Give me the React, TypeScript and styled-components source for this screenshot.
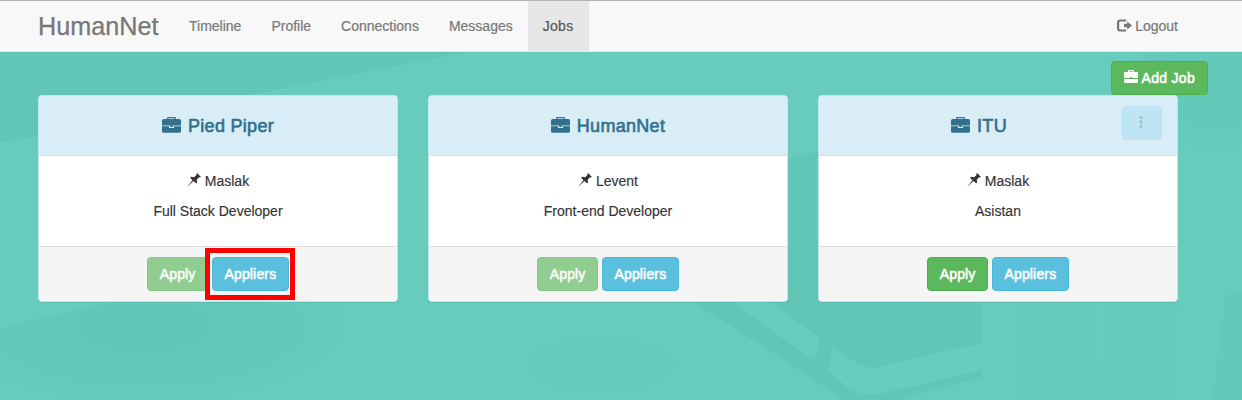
import React from "react";
import styled, { createGlobalStyle, css } from "styled-components";

const GlobalStyle = createGlobalStyle`
  *, *::before, *::after { box-sizing: border-box; }
  body {
    margin: 0;
    font-family: "Liberation Sans", Arial, sans-serif;
    font-size: 14px;
    line-height: 20px;
    color: #333;
  }
`;

const Page = styled.div`
  position: relative;
  height: 400px;
  overflow: hidden;
  background: #67ccbc;
`;

const Backdrop = styled.svg`
  position: absolute;
  inset: 0;
`;

const Navbar = styled.nav`
  position: relative;
  height: 52px;
  display: flex;
  background: #f8f8f8;
  border-top: 1px solid #b4b4b4;
  border-bottom: 1px solid #e7e7e7;
  padding: 0 49px 0 38px;
`;

const Brand = styled.a`
  width: 136px;
  font-size: 25.2px;
  line-height: 50px;
  color: #777;
  -webkit-text-stroke: 0.25px #777;
`;

const NavLink = styled.a<{ $active?: boolean }>`
  display: flex;
  align-items: center;
  gap: 3px;
  padding: 0 15px;
  color: ${(p) => (p.$active ? "#555" : "#777")};
  -webkit-text-stroke: 0.2px currentColor;
  ${(p) =>
    p.$active &&
    css`
      width: 61px;
      letter-spacing: 0.3px;
      background: #e7e7e7;
    `}
`;

const NavRight = styled.div`
  display: flex;
  margin-left: auto;
`;

const Toolbar = styled.div`
  position: relative;
  display: flex;
  justify-content: flex-end;
  padding: 9px 34px 0 0;
`;

const tones = {
  success: css`
    background: #5cb85c;
    border-color: #4cae4c;
  `,
  info: css`
    background: #5bc0de;
    border-color: #46b8da;
  `,
};

const Button = styled.button<{ $tone: "success" | "info"; $faded?: boolean; $spaced?: boolean }>`
  height: 34px;
  display: flex;
  align-items: center;
  gap: 4px;
  padding: 0 ${(p) => (p.$spaced ? 12 : 11.5)}px;
  border: 1px solid;
  border-radius: 4px;
  font: inherit;
  letter-spacing: ${(p) => (p.$spaced ? 0.3 : 0.15)}px;
  color: #fff;
  -webkit-text-stroke: 0.55px #fff;
  ${(p) => tones[p.$tone]}
  opacity: ${(p) => (p.$faded ? 0.65 : 1)};
  svg { margin-top: -3px; }
`;

const Cards = styled.main`
  position: relative;
  display: grid;
  grid-template-columns: repeat(3, 360px);
  gap: 30px;
  padding-left: 38px;
`;

const Card = styled.section`
  height: 207px;
  display: flex;
  flex-direction: column;
  background: #fff;
  border: 1px solid #bce8f1;
  border-radius: 4px;
  box-shadow: 0 1px 1px rgba(0, 0, 0, 0.05);
`;

const CardHeader = styled.header<{ $withMenu?: boolean }>`
  position: relative;
  height: 60px;
  display: flex;
  align-items: center;
  justify-content: center;
  gap: 7px;
  padding-right: ${(p) => (p.$withMenu ? 38 : 0)}px;
  background: #d9edf7;
  border-bottom: 1px solid #bce8f1;
  border-radius: 3px 3px 0 0;
  color: #31708f;
  svg { margin-top: -2px; }
`;

const Title = styled.h3`
  margin: 0;
  font-size: 18px;
  font-weight: 400;
  letter-spacing: 0.3px;
  -webkit-text-stroke: 0.6px #31708f;
`;

const MenuButton = styled.button`
  position: absolute;
  top: 10px;
  right: 15px;
  width: 40px;
  height: 34px;
  display: flex;
  align-items: center;
  justify-content: center;
  padding: 0 2px 0 0;
  background: #bfe4f3;
  border: 1px solid #b9e2f1;
  border-radius: 4px;
`;

const CardBody = styled.div`
  flex: 1;
  padding-top: 15px;
  text-align: center;
`;

const Line = styled.p`
  display: flex;
  justify-content: center;
  gap: 4px;
  margin: 0 0 10px;
  -webkit-text-stroke: 0.15px currentColor;
  svg { margin-top: 2px; }
`;

const CardFooter = styled.footer`
  height: 55px;
  display: flex;
  align-items: flex-start;
  justify-content: center;
  gap: 4px;
  padding-top: 10px;
  background: #f5f5f5;
  border-top: 1px solid #ddd;
  border-radius: 0 0 3px 3px;
`;

const Highlight = styled.span`
  position: relative;
  &::after {
    content: "";
    position: absolute;
    inset: -9px -6px -9px -7px;
    border: 5px solid #f00;
  }
`;

const Briefcase = ({ width = 19, height = 16 }: { width?: number; height?: number }) => (
  <svg width={width} height={height} viewBox="0 0 19 16" fill="currentColor">
    <path fillRule="evenodd" d="M5 2V1.200Q5 0 6.200 0h6.600Q14 0 14 1.200V2h3.400Q19 2 19 3.600V8.400H0V3.600Q0 2 1.600 2ZM6.300 2h6.400v-.8H6.300Z" />
    <path d="M0 9.300h7v.9q0 .9 1 .9h3q1 0 1-.9v-.9h7v5.200q0 1.300-1.400 1.300H1.400Q0 15.800 0 14.500Z" />
    <path d="M8.200 8.200h2.600v1.800H8.200Z" />
  </svg>
);

const SmallBriefcase = () => (
  <svg width="14" height="13" viewBox="0 0 14 13" fill="currentColor">
    <path fillRule="evenodd" d="M4 2V1q0-1 1-1h4q1 0 1 1v1h3q1 0 1 1v5H0V3q0-1 1-1ZM5.200 2h3.600v-.8H5.200ZM6 7v1h2V7Z" />
    <path d="M0 9h14v3q0 1-1 1H1q-1 0-1-1Z" />
  </svg>
);

const LogoutIcon = () => (
  <svg width="15" height="14" viewBox="0 0 15 14" fill="currentColor">
    <path d="M9.200 0.500H3.400Q0 .5 0 3.600v5.800q0 3.100 3.400 3.100h5.800v-2H3.600q-1.400 0-1.400-1.200V3.700q0-1.200 1.400-1.200h5.600Z" />
    <path d="M10.200 2.400 15 6.500l-4.800 4.100V8.300H7V4.700h3.200Z" />
  </svg>
);

const Pin = () => (
  <svg width="14" height="14" viewBox="0 0 14 14" fill="currentColor">
    <path d="M10 0 14 3.900l-1.400.6-.6-.3-2.300 2.500.4 2.900-.9.900-2.600-2.500L0 14l5.500-6.800L3.100 4.800 4.200 3.700l2.900.5 2.400-2.300-.2-.9Z" />
  </svg>
);

const Dots = () => (
  <svg width="4" height="14" viewBox="0 0 4 14" fill="#a9bfca">
    <circle cx="2" cy="2.400" r="1.700" />
    <circle cx="2" cy="7" r="1.700" />
    <circle cx="2" cy="11.600" r="1.700" />
  </svg>
);

const jobs = [
  { company: "Pied Piper", place: "Maslak", role: "Full Stack Developer", applied: true, marked: true },
  { company: "HumanNet", place: "Levent", role: "Front-end Developer", applied: true },
  { company: "ITU", place: "Maslak", role: "Asistan", owned: true },
];

export default function App() {
  return (
    <Page>
      <GlobalStyle />
      <Backdrop width="1242" height="400" viewBox="0 0 1242 400">
        <defs>
          <radialGradient id="shade">
            <stop offset="0" stopColor="#62c6b6" stopOpacity=".8" />
            <stop offset=".6" stopColor="#62c6b6" stopOpacity=".6" />
            <stop offset="1" stopColor="#62c6b6" stopOpacity="0" />
          </radialGradient>
        </defs>
        <path d="M0 52H465L250 95 0 143Z" fill="#62c6b6" />
        <ellipse cx="145" cy="325" rx="220" ry="85" fill="url(#shade)" />
        <path d="M0 143H38V302H112L0 328Z" fill="#67ccbc" />
        <ellipse cx="600" cy="365" rx="90" ry="35" fill="url(#shade)" opacity=".5" />
        <path d="M788 158 818 152V302H982V343L875 368Q858 368 833 347L828 370 850 390 898 400H845Q770 350 690 300Z" fill="#62c6b6" />
        <path d="M733 302H770L819 337 815 362Z" fill="#68cdbe" />
        <path d="M833 347Q858 368 875 368L982 343V370L875 395Q862 396 852 390L828 370Z" fill="#68cdbe" />
        <path d="M982 370V377L898 400H860L856 392Q868 396 875 395Z" fill="#62c6b6" />
        <ellipse cx="1215" cy="75" rx="90" ry="85" fill="url(#shade)" opacity=".75" />
        <path d="M1226 290H1242V400H1212Z" fill="#62c6b6" opacity=".45" />
        <path d="M1015 302h80l-4 98h-74ZM1106 302h73l-9 98h-70Z" fill="#62c6b6" opacity=".15" />
      </Backdrop>
      <Navbar>
        <Brand>HumanNet</Brand>
        <NavLink>Timeline</NavLink>
        <NavLink>Profile</NavLink>
        <NavLink>Connections</NavLink>
        <NavLink>Messages</NavLink>
        <NavLink $active>Jobs</NavLink>
        <NavRight>
          <NavLink>
            <LogoutIcon />
            Logout
          </NavLink>
        </NavRight>
      </Navbar>
      <Toolbar>
        <Button $tone="success" $spaced>
          <SmallBriefcase />
          Add Job
        </Button>
      </Toolbar>
      <Cards>
        {jobs.map((job) => (
          <Card key={job.company}>
            <CardHeader $withMenu={job.owned}>
              <Briefcase />
              <Title>{job.company}</Title>
              {job.owned && (
                <MenuButton aria-label="Options">
                  <Dots />
                </MenuButton>
              )}
            </CardHeader>
            <CardBody>
              <Line>
                <Pin />
                {job.place}
              </Line>
              <Line>{job.role}</Line>
            </CardBody>
            <CardFooter>
              <Button $tone="success" $faded={job.applied}>Apply</Button>
              {job.marked ? (
                <Highlight>
                  <Button $tone="info">Appliers</Button>
                </Highlight>
              ) : (
                <Button $tone="info">Appliers</Button>
              )}
            </CardFooter>
          </Card>
        ))}
      </Cards>
    </Page>
  );
}
